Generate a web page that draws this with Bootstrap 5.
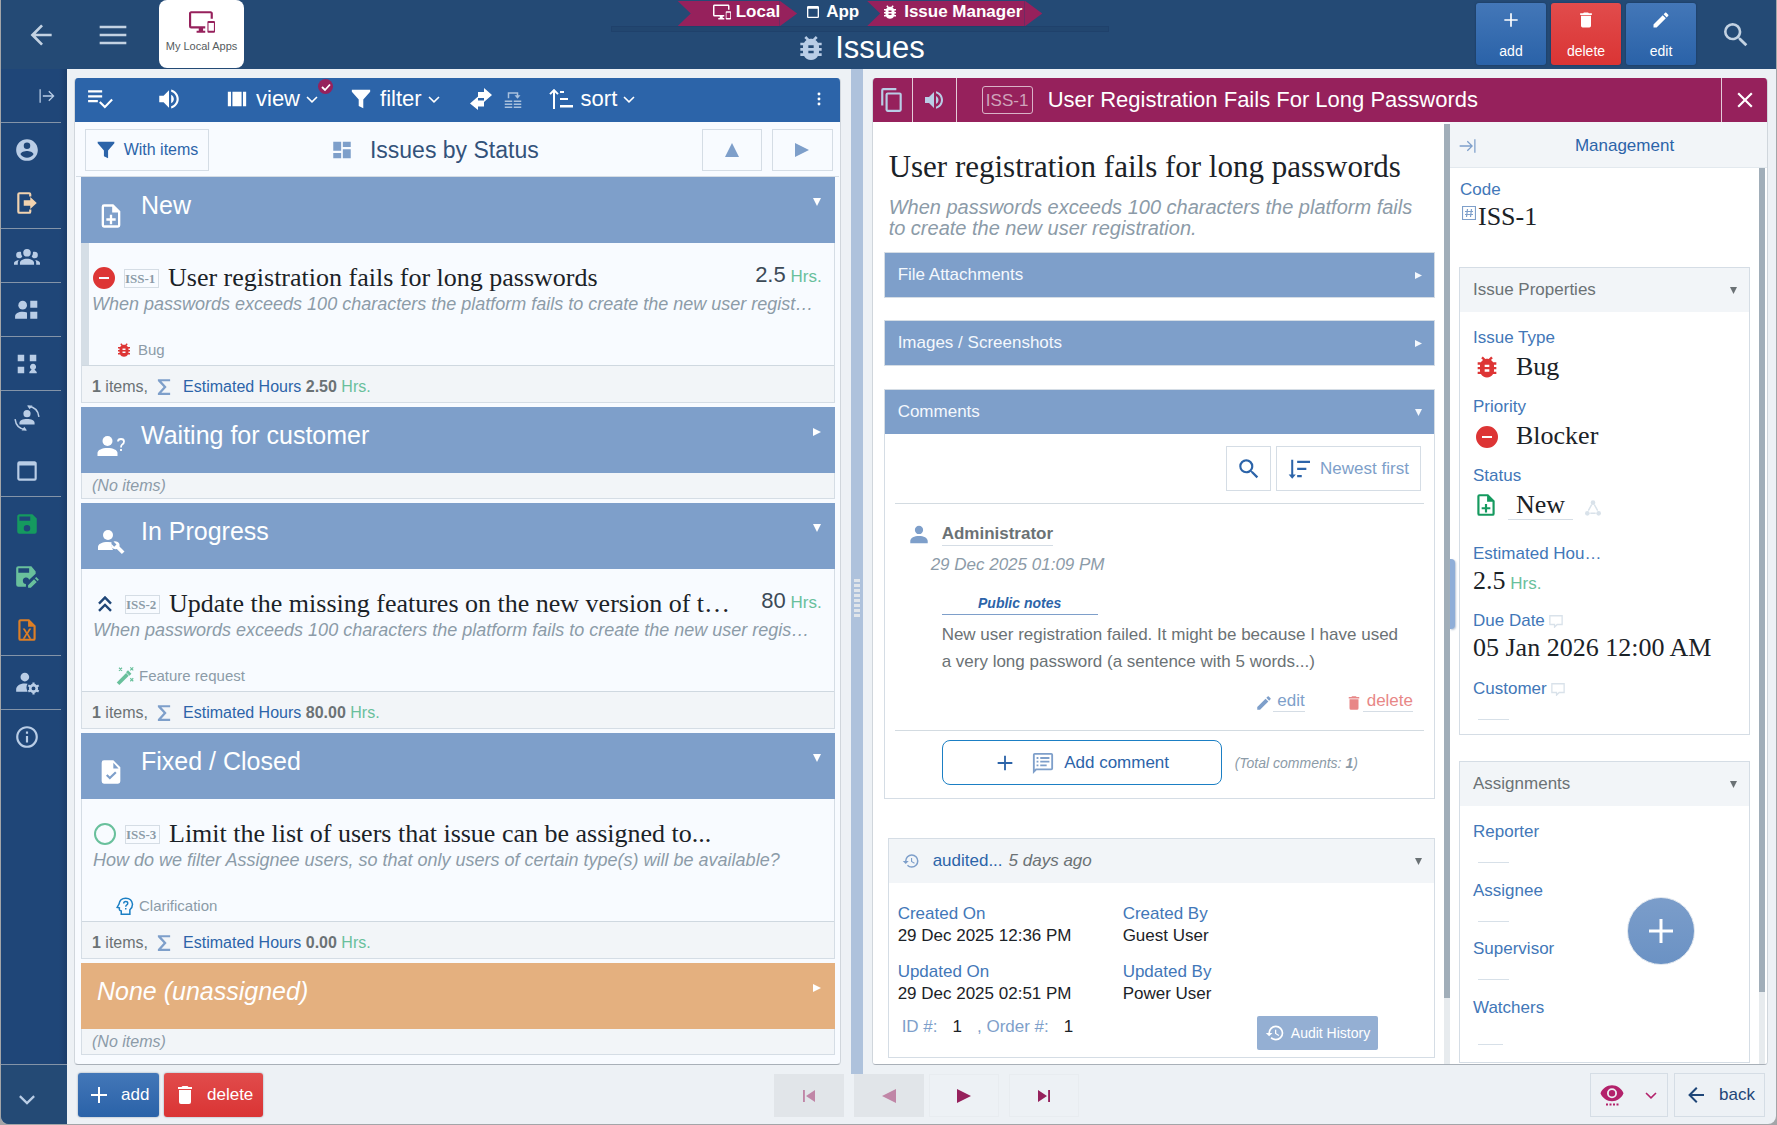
<!DOCTYPE html>
<html lang="en">
<head>
<meta charset="utf-8">
<meta name="viewport" content="width=device-width, initial-scale=1">
<title>Issues</title>
<link href="https://cdn.jsdelivr.net/npm/bootstrap@5.3.0/dist/css/bootstrap.min.css" rel="stylesheet">
<script src="https://cdn.jsdelivr.net/npm/bootstrap@5.3.0/dist/js/bootstrap.bundle.min.js"></script>
<style>
:root{--navy:#244a75;--side:#1f4678;--blue:#2c64a9;--mid:#7e9fca;--plum:#96215c;--line:#d5dde5;--pale:#f2f5f8;--ice:#b9cde6;--grey:#6b7275;--soft:#8c9ba8;--green:#69c09c;--label:#4277b8}
body{font:17px/20px "Liberation Sans",Arial,sans-serif;color:#1b2227;background:#a3a5a8}
a{text-decoration:none;color:inherit}
button{font:inherit;color:inherit;padding:0;border:0;background:none}
svg{display:block;flex:none;fill:currentColor;width:24px;height:24px}
.i12{width:12px;height:12px}.i14{width:14px;height:14px}.i16{width:16px;height:16px}.i18{width:18px;height:18px}.i20{width:20px;height:20px}.i22{width:22px;height:22px}.i26{width:26px;height:26px}.i28{width:28px;height:28px}.i32{width:32px;height:32px}.i36{width:36px;height:36px}
.tri{width:8px;height:8px}
.shell{height:100vh;padding:0 1px 1px;overflow:hidden}
.frame{background:#edf1f5;border-radius:0 0 8px 8px;overflow:hidden}
.topbar{height:69px;background:var(--navy);color:#c3d2e2}
.apptile{width:85px;height:68px;border-radius:8px;background:#fff;color:var(--plum);padding-top:9px;margin-left:30px}
.apptile span{font-size:11px;line-height:14px;color:#555c60;margin-top:4px}
.crumbs{height:25px;margin-top:1px;font-weight:700;color:#fff}
.crumbs a{height:25px;display:flex;align-items:center;gap:5px;padding-bottom:3px}
.crumb-on{background:linear-gradient(to left,transparent 17px,#6f2a62 17px,#6f2a62 18px,transparent 18px) var(--plum);clip-path:polygon(0 0,calc(100% - 17px) 0,100% 50%,calc(100% - 17px) 100%,0 100%,13px 50%)}
.underbar{width:498px;height:6px;border:1px solid #1f416b;background:#22466f}
.apptitle{font-size:31px;line-height:32px;color:#fff}
.bigbtn{width:70px;height:62px;border-radius:3px;color:#fff;font-size:14px;line-height:18px;padding-top:7px;box-shadow:0 0 2px #16335a;display:flex;flex-direction:column;align-items:center;gap:12px}
.gblue{background:linear-gradient(#4377b8,#2a62a8)}
.gred{background:linear-gradient(#e14c4c,#da3434)}
.sidebar{width:66px;flex:none;background:linear-gradient(to right,var(--side) 58px,#1a3c69 66px);color:var(--ice)}
.sidebar .grp{width:60px;border-top:1px solid #8494a8}
.sidebar .slot{height:53px;display:flex;align-items:center;padding-left:13px;width:60px}
.sidebar .grp.many{margin-bottom:-1px}
.sidebar .foot{height:60px;background:var(--navy);border-top:1px solid #8494a8;padding-left:8px}
.panel{background:#f8fbff;border:1px solid #d0d6dc;border-top:0;border-bottom-color:#a9b0b8;border-radius:4px;overflow:hidden}
.toolbar{height:44px;background:var(--blue);color:#fff;font-size:22px;line-height:24px;padding:0 13px 2px 12px}
.toolbar .chev{margin-left:5px}
.dot-badge{width:15px;height:15px;border-radius:50%;background:var(--plum);position:absolute;right:-14px;top:-8px;display:grid;place-items:center}
.subbar{height:55px;border-bottom:1px solid var(--line);padding:2px 6px 0 9px;margin:0 1px}
.obtn{border:1px solid var(--line);height:42px;display:flex;align-items:center;justify-content:center}
.groups{padding:0 5px 0 6px}
.ghead{height:66px;background:var(--mid);color:#fff;padding:13px 14px 0 16px;display:flex}
.ghead h2{font-size:25px;line-height:30px;font-weight:400;margin:0;flex:1}
.ghead .tri{margin-top:8px}
.ghead .gi{margin-top:12px;margin-right:16px}
.gnone{background:#e4b07f;font-style:italic}
.gbox{border:1px solid var(--line);border-top:0;margin-bottom:4px}
.issue{height:122px;padding:20px 0 4px 11px}
.issue.sel{border-left:7px solid #d5dee6;padding-left:3px}
.issue .ttl{font:26px/30px "Liberation Serif",serif;color:#1b2227}
.code{font:bold 13px/17px "Liberation Serif",serif;color:var(--soft);border:1px solid var(--line);width:35px;height:19px;white-space:nowrap;margin:0 9px 0 8px;flex:none}
.num{font-size:22px;color:#3c4a57}
.desc{font-size:18px;line-height:22px;font-style:italic;color:var(--soft)}
.kind{font-size:15px;color:var(--soft);margin-top:25px;padding-left:23px}
.kind svg{margin-right:5px}
.hrs{color:var(--green)}
.gfoot{height:37px;background:var(--pale);border-top:1px solid #cfd8e0;font-size:16px;line-height:18px;padding:5px 0 0 10px;color:var(--grey)}
.gfoot .sg{width:14px;height:18px;margin:0 12px 0 9px;color:#7e9fca}
.gfoot.empty{height:25px;border:0;padding-top:0;font-style:italic;color:var(--soft)}
.splitter{width:12px;flex:none;background:#aec2dc;z-index:1;padding-top:52px}
.grip{width:6px;height:38px;background:repeating-linear-gradient(#e0e5ea 0 3px,transparent 3px 5px)}
.dhead{height:44px;background:var(--plum);color:#fff}
.dhead .cell{height:44px;display:grid;place-items:center;color:var(--ice);border-right:1px solid #e4ccd8}
.iss{border:1px solid #d9b3c7;color:#cfa3ba;border-radius:3px;width:51px;height:28px;line-height:27px;text-align:center}
.scrolls{width:6px;flex:none;background:#e7ebee}
.scrolls i{display:block;background:#a1aeb9}
.dmain{background:#fff;padding:26px 9px 0 11px}
.dmain h1{font:31px/38px "Liberation Serif",serif;margin:0;padding-left:5px}
.dsub{font-size:20px;line-height:21px;font-style:italic;color:var(--soft);padding:0 16px 0 5px;margin-top:11px}
.sect{border:1px solid var(--line)}
.shead{height:44px;background:var(--mid);color:#f4f8fd;padding:0 12px 0 13px;display:flex;align-items:center;justify-content:space-between}
.shead .tri{width:7px;height:7px}
.shead.light{background:var(--pale);color:var(--grey)}
.rule{height:1px;background:#d3dbe1}
.ul{border-bottom:1px solid var(--line)}
.lb{color:var(--label)}
.addc{width:280px;height:45px;border:1px solid #1b7fc4;border-radius:8px;color:var(--blue)}
.dside{background:#fff;width:317px;flex:none}
.mg{height:46px;padding-top:3px;background:var(--pale);color:var(--blue);border-bottom:1px solid #e3e9ee}
.val{font:26px/34px "Liberation Serif",serif;color:#1b2227}
.f1{height:69px}
.blank{width:31px;height:1px;background:#d7e0e8;margin:20px 0 0 5px}
.handle{position:absolute;left:0;top:437px;width:5px;height:70px;background:#8faed8;border-radius:0 4px 4px 0;box-shadow:1px 1px 2px #b8c4d4}
.fab{position:absolute;right:72px;bottom:99px;width:68px;height:68px;border-radius:50%;border:1px solid #dfe6ee;background:linear-gradient(#7b9dca,#6b92c4);color:#fff;display:grid;place-items:center}
.bottombar{height:59px;padding:8px 11px 0 11px}
.bb{height:44px;border-radius:3px;color:#fff;box-shadow:0 0 2px #8a97a6;display:flex;align-items:center}
.pg{width:70px;height:43px;display:grid;place-items:center;color:#c086a7;background:#e1e5e9}
.pg.on{background:none;border:1px solid #e8ecf0;color:var(--plum)}
</style>
</head>
<body>
<svg style="display:none" aria-hidden="true">
<symbol id="left" viewBox="0 0 24 24"><path d="M20,11V13H8L13.5,18.5L12.08,19.92L4.16,12L12.08,4.08L13.5,5.5L8,11H20Z"/></symbol>
<symbol id="menu" viewBox="0 0 24 24"><path d="M2,5H22V7H2M2,11H22V13H2M2,17H22V19H2Z"/></symbol>
<symbol id="dev" viewBox="0 0 24 24"><path d="M23,11H18A1,1 0 0,0 17,12V21A1,1 0 0,0 18,22H23A1,1 0 0,0 24,21V12A1,1 0 0,0 23,11M23,20H18V13H23V20M20,2H2C0.89,2 0,2.89 0,4V16A2,2 0 0,0 2,18H9V20H7V22H15V20H13V18H15V16H2V4H20V9H22V4C22,2.89 21.1,2 20,2Z"/></symbol>
<symbol id="bug" viewBox="0 0 24 24"><path d="M14,12H10V10H14M14,16H10V14H14M20,8H17.19C16.74,7.22 16.12,6.55 15.37,6.04L17,4.41L15.59,3L13.42,5.17C12.96,5.06 12.5,5 12,5C11.5,5 11.04,5.06 10.59,5.17L8.41,3L7,4.41L8.62,6.04C7.88,6.55 7.26,7.22 6.81,8H4V10H6.09C6.04,10.33 6,10.66 6,11V12H4V14H6V15C6,15.34 6.04,15.67 6.09,16H4V18H6.81C7.85,19.79 9.78,21 12,21C14.22,21 16.15,19.79 17.19,18H20V16H17.91C17.96,15.67 18,15.34 18,15V14H20V12H18V11C18,10.66 17.96,10.33 17.91,10H20V8Z"/></symbol>
<symbol id="win" viewBox="0 0 24 24"><path d="M19,3C20.11,3 21,3.9 21,5V19A2,2 0 0,1 19,21H5C3.89,21 3,20.1 3,19V5A2,2 0 0,1 5,3H19M19,19V7H5V19H19Z"/></symbol>
<symbol id="plus" viewBox="0 0 24 24"><path d="M20,13H13V20H11V13H4V11H11V4H13V11H20V13Z"/></symbol>
<symbol id="del" viewBox="0 0 24 24"><path d="M19,4H15.5L14.5,3H9.5L8.5,4H5V6H19M6,19A2,2 0 0,0 8,21H16A2,2 0 0,0 18,19V7H6V19Z"/></symbol>
<symbol id="pen" viewBox="0 0 24 24"><path d="M20.71,7.04C21.1,6.65 21.1,6 20.71,5.63L18.37,3.29C18,2.9 17.35,2.9 16.96,3.29L15.12,5.12L18.87,8.87M3,17.25V21H6.75L17.81,9.93L14.06,6.18L3,17.25Z"/></symbol>
<symbol id="mag" viewBox="0 0 24 24"><path d="M9.5,3A6.5,6.5 0 0,1 16,9.5C16,11.11 15.41,12.59 14.44,13.73L14.71,14H15.5L20.5,19L19,20.5L14,15.5V14.71L13.73,14.44C12.59,15.41 11.11,16 9.5,16A6.5,6.5 0 0,1 3,9.5A6.5,6.5 0 0,1 9.5,3M9.5,5C7,5 5,7 5,9.5C5,12 7,14 9.5,14C12,14 14,12 14,9.5C14,7 12,5 9.5,5Z"/></symbol>
<symbol id="tor" viewBox="0 0 24 24"><path d="M3,4H4.5V20H3ZM7,11.2H18L13.6,6.8L14.7,5.7L21,12L14.7,18.3L13.6,17.2L18,12.8H7Z"/></symbol>
<symbol id="toend" viewBox="0 0 24 24"><path d="M19.5,4H21V20H19.5ZM2,11.2H15L10.6,6.8L11.7,5.7L18,12L11.7,18.3L10.6,17.2L15,12.8H2Z"/></symbol>
<symbol id="ucirc" viewBox="0 0 24 24"><path d="M12,19.2C9.5,19.2 7.29,17.92 6,16C6.03,14 10,12.9 12,12.9C14,12.9 17.97,14 18,16C16.71,17.92 14.5,19.2 12,19.2M12,5A3,3 0 0,1 15,8A3,3 0 0,1 12,11A3,3 0 0,1 9,8A3,3 0 0,1 12,5M12,2A10,10 0 0,0 2,12A10,10 0 0,0 12,22A10,10 0 0,0 22,12C22,6.47 17.5,2 12,2Z"/></symbol>
<symbol id="exit" viewBox="0 0 24 24"><path d="M14,2H5A2,2 0 0,0 3,4V20A2,2 0 0,0 5,22H14A2,2 0 0,0 16,20V18H14V20H5V4H14V6H16V4A2,2 0 0,0 14,2M9,9.5H15V6.5L21,12L15,17.500V14.500H9Z"/></symbol>
<symbol id="grp" viewBox="0 0 24 24"><path d="M12,5.5A3.5,3.5 0 0,1 15.5,9A3.5,3.5 0 0,1 12,12.5A3.5,3.5 0 0,1 8.500,9A3.5,3.5 0 0,1 12,5.5M5,8C5.56,8 6.08,8.15 6.53,8.42C6.38,9.85 6.8,11.27 7.66,12.38C7.16,13.34 6.16,14 5,14A3,3 0 0,1 2,11A3,3 0 0,1 5,8M19,8A3,3 0 0,1 22,11A3,3 0 0,1 19,14C17.84,14 16.84,13.34 16.34,12.38C17.2,11.27 17.62,9.85 17.47,8.42C17.92,8.15 18.44,8 19,8M5.5,18.25C5.5,16.18 8.41,14.5 12,14.5C15.59,14.5 18.5,16.18 18.5,18.25V20H5.5V18.25M0,20V18.5C0,17.11 1.89,15.94 4.45,15.6C3.86,16.28 3.5,17.22 3.5,18.25V20H0M24,20H20.5V18.25C20.5,17.22 20.14,16.28 19.55,15.6C22.11,15.94 24,17.11 24,18.5V20Z"/></symbol>
<symbol id="ugrid" viewBox="0 0 24 24"><circle cx="8" cy="7.500" r="4"/><path d="M1,20V18C1,15 4,13.500 8,13.500Q10.500,13.500 12,14.200V20ZM15,3.500H21.500V10H15ZM15,13.500H21.500V20H15Z"/></symbol>
<symbol id="gridu" viewBox="0 0 24 24"><path d="M2,2H9V9H2ZM15,2H22V9H15ZM2,15H9V22H2ZM14.500,22V20.500L17,18A3.300,3.300 0 1,1 20,18L22.500,20.500V22Z"/></symbol>
<symbol id="usync" viewBox="0 0 24 24"><circle cx="12" cy="8" r="3.300"/><path d="M5,18V16.500C5,14.300 8,13 12,13S19,14.300 19,16.500V18Z"/><path d="M13,1.200Q22,2 23,11M11,22.800Q2,22 1,13" fill="none" stroke="currentColor" stroke-width="1.400"/><path d="M12,0.500H17L14.500,4ZM12,23.500H7L9.500,20Z"/></symbol>
<symbol id="save" viewBox="0 0 24 24"><path d="M15,9H5V5H15M12,19A3,3 0 0,1 9,16A3,3 0 0,1 12,13A3,3 0 0,1 15,16A3,3 0 0,1 12,19M17,3H5C3.89,3 3,3.9 3,5V19A2,2 0 0,0 5,21H19A2,2 0 0,0 21,19V7L17,3Z"/></symbol>
<symbol id="savee" viewBox="0 0 24 24"><path d="M4,2A2,2 0 0,0 2,4V19A2,2 0 0,0 4,21H11V18.500A3,3 0 1,1 14,14.500L20,9V7L16,2ZM4,4H14V8H4Z" fill-rule="evenodd"/><path d="M13,19.500V22H15.500L21,16.500L18.500,14ZM19.300,13.200L21.800,15.700L23,14.500L20.500,12Z"/></symbol>
<symbol id="doc" viewBox="0 0 24 24"><path fill-rule="evenodd" d="M14,2H6A2,2 0 0,0 4,4V20A2,2 0 0,0 6,22H18A2,2 0 0,0 20,20V8L14,2M18,20H6V4H13V9H18V20Z"/></symbol>
<symbol id="docp" viewBox="0 0 24 24"><use href="#doc"/><path d="M11,11H13V14H16V16H13V19H11V16H8V14H11Z"/></symbol>
<symbol id="docx" viewBox="0 0 24 24"><use href="#doc"/><path d="M8,10.500H10L12,14L14,10.500H16L13,15.200L16,20H14L12,16.400L10,20H8L11,15.200Z"/></symbol>
<symbol id="docc" viewBox="0 0 24 24"><path fill-rule="evenodd" d="M14,2H6A2,2 0 0,0 4,4V20A2,2 0 0,0 6,22H18A2,2 0 0,0 20,20V8L14,2M14,4L18.500,9H14ZM11,18.500L7.700,15.200L9,13.900L11,15.900L15.500,11.500L16.800,12.800Z"/></symbol>
<symbol id="ugear" viewBox="0 0 24 24"><circle cx="10" cy="6.500" r="4"/><path d="M2,20V18C2,15 5,12.500 10,12.500Q11.500,12.500 12.500,12.800Q10.500,16 12.500,20Z"/><circle cx="18" cy="17" r="3" fill="none" stroke="currentColor" stroke-width="2.400"/><path d="M17,11.500H19V14H17ZM17,20H19V22.500H17ZM12.700,15L13.700,13.300L15.800,14.500L14.800,16.200ZM22.300,13.300L23.300,15L21.200,16.200L20.200,14.500ZM13.700,20.700L12.700,19L14.800,17.800L15.800,19.500ZM23.300,19L22.300,20.700L20.200,19.500L21.200,17.800Z"/></symbol>
<symbol id="info" viewBox="0 0 24 24"><path d="M11,9H13V7H11M12,20C7.59,20 4,16.41 4,12C4,7.59 7.59,4 12,4C16.41,4 20,7.59 20,12C20,16.41 16.41,20 12,20M12,2A10,10 0 0,0 2,12A10,10 0 0,0 12,22A10,10 0 0,0 22,12A10,10 0 0,0 12,2M11,17H13V11H11V17Z"/></symbol>
<symbol id="chev" viewBox="0 0 24 24"><path d="M4.400,7.500L12,15.100L19.600,7.500L21.500,9.500L12,19L2.500,9.500Z"/></symbol>
<symbol id="lchk" viewBox="0 0 24 24"><path d="M1,4H14V6H1ZM1,8.500H14V10.500H1ZM1,13H10V15H1ZM12.500,14L16.500,18L22.500,11.800L23.900,13.200L16.500,20.800L11.100,15.400Z"/></symbol>
<symbol id="vol" viewBox="0 0 24 24"><path d="M14,3.23V5.29C16.89,6.15 19,8.83 19,12C19,15.17 16.89,17.84 14,18.7V20.77C18,19.86 21,16.28 21,12C21,7.72 18,4.14 14,3.23M16.5,12C16.5,10.23 15.5,8.71 14,7.97V16C15.5,15.29 16.5,13.76 16.5,12M3,9V15H7L12,20V4L7,9H3Z"/></symbol>
<symbol id="cols" viewBox="0 0 24 24"><path d="M2,4H5.500V20H2ZM7,4H17V20H7ZM18.500,4H22V20H18.500Z"/></symbol>
<symbol id="fun" viewBox="0 0 24 24"><path d="M2,2H22V4L14.500,12.500V22L9.500,19.500V12.500L2,4Z"/></symbol>
<symbol id="swap" viewBox="0 0 24 24"><path d="M9,5H15V1L23,8L15,15V11H9ZM15,13.500H9V9.500L1,16.500L9,23V19.500H15Z"/></symbol>
<symbol id="cpy2" viewBox="0 0 24 24"><path d="M1,14H11V16H1ZM1,18H11V20H1ZM1,22H11V24H1ZM13,14H23V16H13ZM13,18H23V20H13ZM13,22H23V24H13ZM5,11V3H19V7H22L18,11.500L14,7H17V5H7V11Z"/></symbol>
<symbol id="sort" viewBox="0 0 24 24"><path d="M4,22V5.500L1.700,7.800L0.300,6.400L5,1.700L9.700,6.400L8.300,7.800L6,5.500V22ZM11,4H15V6H11ZM11,11H19V13H11ZM11,18H24V20.500H11Z"/></symbol>
<symbol id="sortd" viewBox="0 0 24 24"><path d="M3.500,2V18H0.700L4.600,22.500L8.500,18H5.700V2ZM10,3H24V5.500H10ZM10,10.500H20V13H10ZM10,18.500H15V21H10Z"/></symbol>
<symbol id="dots" viewBox="0 0 24 24"><circle cx="12" cy="4.500" r="2.200"/><circle cx="12" cy="12" r="2.200"/><circle cx="12" cy="19.500" r="2.200"/></symbol>
<symbol id="dash" viewBox="0 0 24 24"><path d="M13,2V8.500H22.500V2M13,22H22.500V11H13M1.500,22H11V15.500H1.500M1.500,13H11V2H1.500V13Z"/></symbol>
<symbol id="tu" viewBox="0 0 8 8"><path d="M4,0L8,8H0Z"/></symbol>
<symbol id="tr" viewBox="0 0 8 8"><path d="M0,0L8,4L0,8Z"/></symbol>
<symbol id="tl" viewBox="0 0 8 8"><path d="M8,0L0,4L8,8Z"/></symbol>
<symbol id="td" viewBox="0 0 8 8"><path d="M0,0H8L4,8Z"/></symbol>
<symbol id="user" viewBox="0 0 24 24"><path d="M12,2A4.500,4.500 0 1,1 12,11A4.500,4.500 0 1,1 12,2M12,13C17,13 21.500,15 21.500,18.500V21H2.500V18.500C2.500,15 7,13 12,13Z"/></symbol>
<symbol id="uq" viewBox="0 0 28 24"><circle cx="10.500" cy="7" r="5"/><path d="M0.500,22V19C0.500,16 5,14 10.500,14S20.500,16 20.500,19V22Z"/><path d="M21,7.500Q21,5 24,5T27,7.500Q27,9.500 25.200,10.500Q24,11.200 24,13.500M24,15V17" fill="none" stroke="currentColor" stroke-width="1.800"/></symbol>
<symbol id="uw" viewBox="0 0 28 24"><circle cx="11" cy="5" r="5"/><path d="M1,20V17C1,14 5,12 11,12Q13,12 14.500,12.300Q13.500,16 16,20Z"/><path d="M27.500,21.500L22.500,16.500Q23,13 20.200,11.800Q18.500,11 16.500,11.500L19.500,14.500L17.200,16.800L14.200,13.800Q13.500,16.500 15.200,18Q17.200,19.600 19.800,19L24.900,24Z"/></symbol>
<symbol id="minus" viewBox="0 0 24 24"><path d="M17,13H7V11H17M12,1A11,11 0 1,0 12,23A11,11 0 1,0 12,1Z"/></symbol>
<symbol id="dup" viewBox="0 0 24 24"><path d="M6,21L4,19L12,11L20,19L18,21L12,15L6,21M6,12.500L4,10.500L12,2.500L20,10.500L18,12.500L12,6.500Z"/></symbol>
<symbol id="ring" viewBox="0 0 24 24"><circle cx="12" cy="12" r="10" fill="none" stroke="currentColor" stroke-width="2"/></symbol>
<symbol id="wand" viewBox="0 0 24 24"><path d="M1,20.500L13.500,8L17,11.500L4.500,24Z"/><path d="M14.500,7L16,5.500L19.500,9L18,10.500ZM4,1L8,5M8,1L4,5M19,0.500L23,4.500M23,0.500L19,4.500M19,15L23,19M23,15L19,19" stroke="currentColor" stroke-width="1.500"/></symbol>
<symbol id="head" viewBox="0 0 24 24"><path d="M7,23V18.500Q4,18.500 4.500,14.500L1.500,14L4,9.500Q5,1.500 13,1.500T22,9.500Q22,14 18.500,17V23Z" fill="none" stroke="currentColor" stroke-width="2"/><path d="M10.300,8.500Q10.300,6 13,6T15.700,8.200Q15.700,9.700 14,10.700Q13,11.300 13,13M13,14.500V16.500" fill="none" stroke="currentColor" stroke-width="1.900"/></symbol>
<symbol id="sig" viewBox="0 0 16 20"><path d="M1,1H15V3.500H5L11,10L5,16.500H15V19H1V17L7.500,10L1,3Z"/></symbol>
<symbol id="copy" viewBox="0 0 24 24"><path d="M19,21H8V7H19M19,5H8A2,2 0 0,0 6,7V21A2,2 0 0,0 8,23H19A2,2 0 0,0 21,21V7A2,2 0 0,0 19,5M16,1H4A2,2 0 0,0 2,3V17H4V3H16V1Z"/></symbol>
<symbol id="x" viewBox="0 0 24 24"><path d="M19,6.41L17.59,5L12,10.59L6.41,5L5,6.41L10.59,12L5,17.59L6.41,19L12,13.41L17.59,19L19,17.59L13.41,12L19,6.41Z"/></symbol>
<symbol id="hist" viewBox="0 0 24 24"><path d="M13.5,8H12V13L16.28,15.54L17,14.33L13.5,12.25V8M13,3A9,9 0 0,0 4,12H1L4.96,16.03L9,12H6A7,7 0 0,1 13,5A7,7 0 0,1 20,12A7,7 0 0,1 13,19C11.07,19 9.32,18.21 8.06,16.94L6.64,18.36C8.27,20 10.5,21 13,21A9,9 0 0,0 22,12A9,9 0 0,0 13,3"/></symbol>
<symbol id="note" viewBox="0 0 24 24"><path fill-rule="evenodd" d="M3,1H21A2,2 0 0,1 23,3V18A2,2 0 0,1 21,20H5L1,24V3A2,2 0 0,1 3,1M3,3V19L4,18H21V3ZM5,5.500H7V7.500H5ZM5,9.500H7V11.500H5ZM5,13.500H7V15.500H5ZM9,5.500H19V7.500H9ZM9,9.500H19V11.500H9ZM9,13.500H16V15.500H9Z"/></symbol>
<symbol id="hash" viewBox="0 0 14 14"><path d="M0.500,0.500H13.500V13.500H0.500ZM5.500,3L4.500,11M9.500,3L8.500,11M3,5.500H11M3,8.500H11" fill="none" stroke="currentColor" stroke-width="1.200"/></symbol>
<symbol id="flow" viewBox="0 0 24 24"><circle cx="12" cy="4" r="3.500"/><circle cx="3.500" cy="20" r="3.500"/><circle cx="20.500" cy="20" r="3.500"/><path d="M10,7L5,16M14,7L19,16M8,20H16" fill="none" stroke="currentColor" stroke-width="2.200"/></symbol>
<symbol id="bub" viewBox="0 0 24 24"><path d="M1.500,3H22.500V18H14L9.500,22.500V18H1.500Z" fill="none" stroke="currentColor" stroke-width="2.200"/></symbol>
<symbol id="eye" viewBox="0 0 24 24"><path d="M12,7A3.200,3.200 0 1,0 12,13.400A3.200,3.200 0 1,0 12,7M12,15.200A5,5 0 0,1 12,5.200A5,5 0 0,1 12,15.200M12,2.200C7,2.200 2.200,5.500 0.500,10.200C2.200,14.900 7,18.200 12,18.200C17,18.200 21.800,14.900 23.500,10.200C21.800,5.500 17,2.200 12,2.200Z"/><path d="M6,20.500H8V22.500H6ZM9.500,20.500H11.500V22.500H9.500ZM13,20.500H15V22.500H13ZM16.500,20.500H18.500V22.500H16.500Z"/></symbol>
<symbol id="first" viewBox="0 0 24 24"><path d="M4,4H6.500V20H4ZM20,4L8,12L20,20Z"/></symbol>
<symbol id="last" viewBox="0 0 24 24"><path d="M17.500,4H20V20H17.500ZM4,4L16,12L4,20Z"/></symbol>
</svg>

<div class="shell">
<div class="frame d-flex flex-column h-100">
  <header class="topbar d-flex">
    <button class="ms-4 ps-1" aria-label="Back"><svg class="i32" style="margin-left:-4px"><use href="#left"/></svg></button>
    <button class="ms-5" aria-label="Menu"><svg class="i32" style="margin-left:-8px"><use href="#menu"/></svg></button>
    <a href="#" class="apptile d-flex flex-column align-items-center"><svg class="i26"><use href="#dev"/></svg><span>My Local Apps</span></a>
    <div class="flex-fill d-flex flex-column align-items-center">
      <nav class="crumbs d-flex" aria-label="Breadcrumb">
        <a href="#" class="crumb-on" style="padding-left:35px;padding-right:17px"><svg class="i18"><use href="#dev"/></svg>Local</a>
        <a href="#" class="px-2"><svg class="i16"><use href="#win"/></svg>App</a>
        <a href="#" class="crumb-on" style="padding-left:14px;padding-right:20px"><svg class="i18"><use href="#bug"/></svg>Issue Manager</a>
      </nav>
      <div class="underbar"></div>
      <div class="apptitle d-flex align-items-center"><svg class="i32 me-2" style="color:#b9cde6"><use href="#bug"/></svg>Issues</div>
    </div>
    <div class="d-flex" style="gap:5px;padding-top:3px">
      <button class="bigbtn gblue"><svg class="i20"><use href="#plus"/></svg>add</button>
      <button class="bigbtn gred"><svg class="i20"><use href="#del"/></svg>delete</button>
      <button class="bigbtn gblue"><svg class="i20"><use href="#pen"/></svg>edit</button>
    </div>
    <button class="mx-4" aria-label="Search"><svg class="i32"><use href="#mag"/></svg></button>
  </header>

  <div class="d-flex flex-fill" style="min-height:0">
    <aside class="sidebar d-flex flex-column">
      <button class="slot justify-content-end pe-1" aria-label="Expand"><svg class="i20"><use href="#tor"/></svg></button>
      <div class="grp many"><a href="#" class="slot" title="Profile"><svg class="i26"><use href="#ucirc"/></svg></a><a href="#" class="slot" title="Log out" style="color:#f2d3b0"><svg class="i26"><use href="#exit"/></svg></a></div>
      <div class="grp"><a href="#" class="slot" title="Groups"><svg class="i26"><use href="#grp"/></svg></a></div>
      <div class="grp"><a href="#" class="slot" title="User apps"><svg class="i26"><use href="#ugrid"/></svg></a></div>
      <div class="grp"><a href="#" class="slot" title="Roles"><svg class="i26" viewBox="-2 -2 28 28"><use href="#gridu" width="24" height="24"/></svg></a></div>
      <div class="grp many"><a href="#" class="slot" title="Switch user"><svg class="i26"><use href="#usync"/></svg></a><a href="#" class="slot" title="Window"><svg class="i26"><use href="#win"/></svg></a></div>
      <div class="grp many"><a href="#" class="slot" title="Save" style="color:#159a5f"><svg class="i26"><use href="#save"/></svg></a><a href="#" class="slot" title="Save as" style="color:#69c09c"><svg class="i26"><use href="#savee"/></svg></a><a href="#" class="slot" title="Export" style="color:#dd7f26"><svg class="i26"><use href="#docx"/></svg></a></div>
      <div class="grp"><a href="#" class="slot" title="Settings"><svg class="i26"><use href="#ugear"/></svg></a></div>
      <div class="grp"><a href="#" class="slot" title="Info"><svg class="i26"><use href="#info"/></svg></a></div>
      <div class="foot mt-auto d-flex align-items-center pt-2"><button aria-label="More"><svg class="i20 mx-2"><use href="#chev"/></svg></button></div>
    </aside>

    <div class="flex-fill d-flex flex-column" style="min-width:0">
      <div class="d-flex flex-fill" style="min-height:0;padding:9px 8px 0 7px">
        <section class="panel" style="flex:766 1 0;min-width:0">
          <div class="toolbar d-flex align-items-center">
            <button aria-label="Select"><svg class="i26"><use href="#lchk"/></svg></button>
            <button aria-label="Speak" style="margin:0 44px 0 43px"><svg class="i26"><use href="#vol"/></svg></button>
            <button class="d-flex align-items-center position-relative"><svg class="i22 me-2"><use href="#cols"/></svg>view<svg class="i14 chev"><use href="#chev"/></svg><span class="dot-badge"><svg class="i12" viewBox="0 0 12 12"><path d="M2,6L5,9L10,3.500" fill="none" stroke="#fff" stroke-width="1.800"/></svg></span></button>
            <button class="d-flex align-items-center" style="margin:0 28px 0 31px"><svg class="i22 me-2"><use href="#fun"/></svg>filter<svg class="i14 chev"><use href="#chev"/></svg></button>
            <button aria-label="Swap"><svg><use href="#swap"/></svg></button>
            <button aria-label="Copy across" style="color:#a9c1de;margin:0 27px 0 11px"><svg class="i18"><use href="#cpy2"/></svg></button>
            <button class="d-flex align-items-center"><svg class="me-2"><use href="#sort"/></svg>sort<svg class="i14 chev"><use href="#chev"/></svg></button>
            <button class="ms-auto" aria-label="More"><svg class="i16"><use href="#dots"/></svg></button>
          </div>
          <div class="subbar d-flex align-items-center">
            <button class="obtn" style="width:124px;font-size:16px;color:var(--blue)"><svg class="i20 me-2"><use href="#fun"/></svg>With items</button>
            <div class="flex-fill d-flex align-items-center justify-content-center" style="font-size:23px;color:#33527a;padding-right:40px"><svg class="i20" style="color:#7e9fca;margin-right:18px"><use href="#dash"/></svg>Issues by Status</div>
            <button class="obtn" style="width:60px;color:#7e9fca" aria-label="Up"><svg class="i14"><use href="#tu"/></svg></button>
            <button class="obtn" style="width:61px;margin-left:10px;color:#7e9fca" aria-label="Right"><svg class="i14"><use href="#tr"/></svg></button>
          </div>
          <div class="groups">
            <div class="ghead"><svg class="gi i28"><use href="#docp"/></svg><h2>New</h2><svg class="tri"><use href="#td"/></svg></div>
            <div class="gbox">
              <article class="issue sel">
                <div class="d-flex align-items-center">
                  <svg style="color:#dd3535"><use href="#minus"/></svg><span class="code">ISS-1</span>
                  <div class="ttl text-truncate flex-fill">User registration fails for long passwords</div>
                  <div class="text-nowrap pe-2 me-1 pb-1"><span class="num">2.5</span> <span class="hrs">Hrs.</span></div>
                </div>
                <div class="desc text-truncate">When passwords exceeds 100 characters the platform fails to create the new user regist…</div>
                <div class="kind d-flex align-items-center"><svg class="i18" style="color:#dd3535"><use href="#bug"/></svg>Bug</div>
              </article>
              <div class="gfoot d-flex align-items-center"><span><b>1</b> items,</span><svg class="sg"><use href="#sig"/></svg><span><span style="color:var(--blue)">Estimated Hours</span> <b>2.50</b> <span class="hrs">Hrs.</span></span></div>
            </div>
            <div class="ghead"><svg class="gi i28"><use href="#uq"/></svg><h2>Waiting for customer</h2><svg class="tri"><use href="#tr"/></svg></div>
            <div class="gbox"><div class="gfoot empty d-flex align-items-center">(No items)</div></div>
            <div class="ghead"><svg class="gi i28"><use href="#uw"/></svg><h2>In Progress</h2><svg class="tri"><use href="#td"/></svg></div>
            <div class="gbox">
              <article class="issue">
                <div class="d-flex align-items-center">
                  <svg style="color:#1f4678" viewBox="-2 -2 28 28"><use href="#dup" width="24" height="24"/></svg><span class="code">ISS-2</span>
                  <div class="ttl text-truncate flex-fill">Update the missing features on the new version of t…</div>
                  <div class="text-nowrap pe-2 me-1 pb-1"><span class="num">80</span> <span class="hrs">Hrs.</span></div>
                </div>
                <div class="desc text-truncate">When passwords exceeds 100 characters the platform fails to create the new user regis…</div>
                <div class="kind d-flex align-items-center"><svg class="i18" style="color:#69c09c"><use href="#wand"/></svg>Feature request</div>
              </article>
              <div class="gfoot d-flex align-items-center"><span><b>1</b> items,</span><svg class="sg"><use href="#sig"/></svg><span><span style="color:var(--blue)">Estimated Hours</span> <b>80.00</b> <span class="hrs">Hrs.</span></span></div>
            </div>
            <div class="ghead"><svg class="gi i28"><use href="#docc"/></svg><h2>Fixed / Closed</h2><svg class="tri"><use href="#td"/></svg></div>
            <div class="gbox">
              <article class="issue">
                <div class="d-flex align-items-center">
                  <svg style="color:#69c09c"><use href="#ring"/></svg><span class="code">ISS-3</span>
                  <div class="ttl text-truncate flex-fill">Limit the list of users that issue can be assigned to...</div>
                </div>
                <div class="desc text-truncate">How do we filter Assignee users, so that only users of certain type(s) will be available?</div>
                <div class="kind d-flex align-items-center"><svg class="i18" style="color:#1b7fc4"><use href="#head"/></svg>Clarification</div>
              </article>
              <div class="gfoot d-flex align-items-center"><span><b>1</b> items,</span><svg class="sg"><use href="#sig"/></svg><span><span style="color:var(--blue)">Estimated Hours</span> <b>0.00</b> <span class="hrs">Hrs.</span></span></div>
            </div>
            <div class="ghead gnone"><h2>None (unassigned)</h2><svg class="tri"><use href="#tr"/></svg></div>
            <div class="gbox"><div class="gfoot empty d-flex align-items-center">(No items)</div></div>
          </div>
        </section>

        <div class="splitter d-flex align-items-center justify-content-center" style="margin:-9px 9px -9px 10px"><div class="grip"></div></div>

        <section class="panel d-flex flex-column" style="flex:896 1 0;min-width:0">
          <div class="dhead d-flex align-items-center">
            <button class="cell" style="width:40px" aria-label="Copy"><svg class="i26"><use href="#copy"/></svg></button>
            <button class="cell" style="width:44px" aria-label="Speak"><svg><use href="#vol"/></svg></button>
            <span class="iss" style="margin:0 15px 0 25px">ISS-1</span>
            <span class="flex-fill" style="font-size:22px">User Registration Fails For Long Passwords</span>
            <button class="cell" style="width:46px;color:#fff;border:0;border-left:1px solid #e4ccd8" aria-label="Close"><svg class="i26"><use href="#x"/></svg></button>
          </div>
          <div class="d-flex flex-fill" style="min-height:0">
            <div class="dmain flex-fill" style="min-width:0">
              <h1>User registration fails for long passwords</h1>
              <div class="dsub">When passwords exceeds 100 characters the platform fails to create the new user registration.</div>
              <div class="sect" style="margin-top:13px"><div class="shead">File Attachments<svg class="tri"><use href="#tr"/></svg></div></div>
              <div class="sect" style="margin-top:22px"><div class="shead">Images / Screenshots<svg class="tri"><use href="#tr"/></svg></div></div>
              <div class="sect" style="margin-top:23px">
                <div class="shead">Comments<svg class="tri"><use href="#td"/></svg></div>
                <div style="padding:12px 10px 13px 10px">
                  <div class="d-flex justify-content-end" style="gap:5px;padding-right:3px">
                    <button class="obtn" style="width:45px;height:45px;color:var(--blue)" aria-label="Search comments"><svg class="i26"><use href="#mag"/></svg></button>
                    <button class="obtn" style="width:145px;height:45px;color:#7e9fca;gap:10px"><svg class="i22" style="color:var(--blue)"><use href="#sortd"/></svg>Newest first</button>
                  </div>
                  <div class="rule" style="margin-top:12px"></div>
                  <div style="padding:20px 11px 0 13px">
                    <div class="d-flex"><svg class="i22" style="color:#7e9fca;margin-right:12px"><use href="#user"/></svg><a href="#" class="fw-bold ul" style="color:var(--grey)">Administrator</a></div>
                    <div class="fst-italic" style="color:var(--soft);margin:9px 0 0 23px">29 Dec 2025 01:09 PM</div>
                    <div style="padding-left:34px">
                      <div class="fw-bold fst-italic text-center" style="width:156px;font-size:14px;line-height:22px;margin-top:17px;color:var(--blue);border-bottom:1px solid #7e9fca">Public notes</div>
                      <p class="mb-0 pe-2" style="line-height:27px;margin-top:6px;color:var(--grey)">New user registration failed. It might be because I have used a very long password (a sentence with 5 words...)</p>
                    </div>
                    <div class="d-flex justify-content-end" style="margin-top:16px;gap:40px">
                      <a href="#" class="d-flex" style="color:#7e9fca"><svg class="i18" style="margin-top:3px"><use href="#pen"/></svg><span class="ul ps-1">edit</span></a>
                      <a href="#" class="d-flex" style="color:#e88787"><svg class="i18" style="margin-top:3px"><use href="#del"/></svg><span class="ul ps-1">delete</span></a>
                    </div>
                  </div>
                  <div class="rule" style="margin-top:18px"></div>
                  <div class="d-flex align-items-center" style="padding:9px 0 0 47px">
                    <button class="addc d-flex align-items-center justify-content-center"><svg class="i22" style="margin-right:16px"><use href="#plus"/></svg><svg class="i22" style="color:#7e9fca;margin-right:10px"><use href="#note"/></svg>Add comment</button>
                    <span class="fst-italic" style="font-size:14px;color:var(--soft);margin-left:13px">(Total comments: <b>1</b>)</span>
                  </div>
                </div>
              </div>
              <div class="sect" style="margin:39px 0 0 4px">
                <div class="shead light"><span class="d-flex align-items-center"><svg class="i18" style="color:#7e9fca;margin-right:13px"><use href="#hist"/></svg><span style="color:var(--blue)">audited...</span><i style="padding-left:6px">5 days ago</i></span><svg class="tri"><use href="#td"/></svg></div>
                <div style="padding:20px 56px 7px 9px;line-height:22px">
                  <div class="d-flex"><div style="width:225px"><div class="lb">Created On</div>29 Dec 2025 12:36 PM</div><div><div class="lb">Created By</div>Guest User</div></div>
                  <div class="d-flex" style="margin-top:14px"><div style="width:225px"><div class="lb">Updated On</div>29 Dec 2025 02:51 PM</div><div><div class="lb">Updated By</div>Power User</div></div>
                  <div class="d-flex ps-1" style="margin-top:11px"><span style="color:#7e9fca">ID #:</span><span style="margin:0 15px">1</span><span style="color:#7e9fca">, Order #:</span><span style="margin-left:15px">1</span>
                    <button class="ms-auto d-flex align-items-center justify-content-center text-white" style="width:121px;height:34px;font-size:14px;border-radius:2px;background:#94afd3"><svg class="i20" style="margin-right:6px"><use href="#hist"/></svg>Audit History</button></div>
                </div>
              </div>
            </div>
            <div class="scrolls" style="margin-top:2px"><i style="height:93%"></i></div>
            <div class="dside d-flex flex-column position-relative">
              <span class="handle"></span>
              <div class="mg d-flex align-items-center"><svg class="i20 ms-2" style="color:#7e9fca"><use href="#toend"/></svg><span class="flex-fill text-center ps-1">Management</span></div>
              <div class="d-flex flex-fill" style="min-height:0">
                <div class="flex-fill" style="padding:0 9px">
                  <div class="lb" style="padding:12px 0 0 1px">Code</div>
                  <div class="d-flex" style="padding-left:3px"><svg class="i14" style="color:#7e9fca;margin-top:6px;margin-right:2px"><use href="#hash"/></svg><span class="val">ISS-1</span></div>
                  <div class="sect" style="margin-top:33px">
                    <div class="shead light">Issue Properties<svg class="tri"><use href="#td"/></svg></div>
                    <div style="padding:16px 13px 0">
                      <div class="f1"><div class="lb">Issue Type</div><div class="d-flex align-items-center pt-1"><svg class="i28" style="color:#dd3535;margin-right:15px"><use href="#bug"/></svg><span class="val" style="line-height:30px">Bug</span></div></div>
                      <div class="f1"><div class="lb">Priority</div><div class="d-flex align-items-center pt-1"><svg style="color:#dd3535;margin:2px 17px 0 2px"><use href="#minus"/></svg><span class="val" style="line-height:30px">Blocker</span></div></div>
                      <div style="height:78px"><div class="lb">Status</div><div class="d-flex align-items-center pt-1"><svg class="i26" style="color:#159a5f;margin-right:9px"><use href="#docp"/></svg><a href="#" class="val ul px-2" style="line-height:29px">New</a><svg class="i16" style="color:#d9e2ea;margin:6px 0 0 12px"><use href="#flow"/></svg></div></div>
                      <div style="height:67px"><div class="lb">Estimated Hou…</div><div><span class="val">2.5</span> <span class="hrs">Hrs.</span></div></div>
                      <div style="height:68px"><div class="lb d-flex align-items-center">Due Date<svg class="i14 ms-1" style="color:#d9e2ea"><use href="#bub"/></svg></div><div class="val">05 Jan 2026 12:00 AM</div></div>
                      <div style="height:55px"><div class="lb d-flex align-items-center">Customer<svg class="i14 ms-1" style="color:#d9e2ea"><use href="#bub"/></svg></div><div class="blank"></div></div>
                    </div>
                  </div>
                  <div class="sect" style="margin-top:26px">
                    <div class="shead light">Assignments<svg class="tri"><use href="#td"/></svg></div>
                    <div style="padding:16px 13px 0;height:256px">
                      <div style="height:59px"><div class="lb">Reporter</div><div class="blank"></div></div>
                      <div style="height:58px"><div class="lb">Assignee</div><div class="blank"></div></div>
                      <div style="height:59px"><div class="lb">Supervisor</div><div class="blank"></div></div>
                      <div><div class="lb">Watchers</div><div class="blank" style="margin-top:26px;width:25px"></div></div>
                    </div>
                  </div>
                </div>
                <div class="scrolls" style="margin-right:2px"><i style="height:92%"></i></div>
              </div>
              <button class="fab" aria-label="Add"><svg class="i36"><use href="#plus"/></svg></button>
            </div>
          </div>
        </section>
      </div>

      <footer class="bottombar d-flex justify-content-between">
        <div class="d-flex" style="gap:5px">
          <button class="bb gblue" style="width:81px;padding-left:9px;gap:10px"><svg><use href="#plus"/></svg>add</button>
          <button class="bb gred" style="width:99px;padding-left:9px;gap:10px"><svg><use href="#del"/></svg>delete</button>
        </div>
        <div class="d-flex" style="gap:10px;padding-top:1px">
          <button class="pg" aria-label="First"><svg class="i18"><use href="#first"/></svg></button>
          <button class="pg" aria-label="Previous"><svg class="i14"><use href="#tl"/></svg></button>
          <button class="pg on" style="margin-left:-5px" aria-label="Next"><svg class="i14"><use href="#tr"/></svg></button>
          <button class="pg on" aria-label="Last"><svg class="i18"><use href="#last"/></svg></button>
        </div>
        <div class="d-flex" style="gap:6px">
          <button class="obtn" style="width:78px;height:44px;color:#b3226b;gap:20px" aria-label="View options"><svg><use href="#eye"/></svg><svg class="i14"><use href="#chev"/></svg></button>
          <button class="obtn" style="width:91px;height:44px;color:#1f4678;gap:11px"><svg><use href="#left"/></svg>back</button>
        </div>
      </footer>
    </div>
  </div>
</div>
</div>
</body>
</html>
